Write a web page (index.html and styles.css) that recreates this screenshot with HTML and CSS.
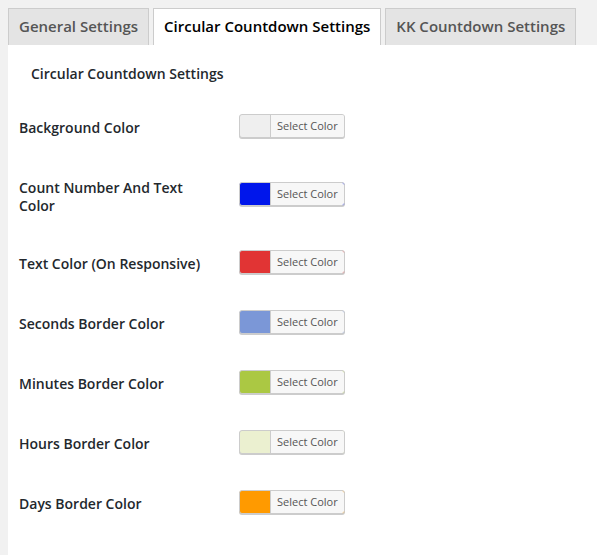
FILE: index.html
```html
<!DOCTYPE html>
<html>
<head>
<meta charset="utf-8">
<link rel="stylesheet" href="styles.css">
</head>
<body>
<div class="wrap">
  <nav class="tabs">
    <a class="tab">General Settings</a>
    <a class="tab active">Circular Countdown Settings</a>
    <a class="tab">KK Countdown Settings</a>
  </nav>
  <div class="panel">
    <h3 class="section-title">Circular Countdown Settings</h3>
    <table class="form-table">
      <tr>
        <th>Background Color</th>
        <td><span class="color-result" style="background-color:#efefef"><span class="color-label">Select Color</span></span></td>
      </tr>
      <tr>
        <th>Count Number And Text Color</th>
        <td><span class="color-result" style="background-color:#0016eb"><span class="color-label">Select Color</span></span></td>
      </tr>
      <tr>
        <th>Text Color (On Responsive)</th>
        <td><span class="color-result" style="background-color:#e13434"><span class="color-label">Select Color</span></span></td>
      </tr>
      <tr>
        <th>Seconds Border Color</th>
        <td><span class="color-result" style="background-color:#7b97d7"><span class="color-label">Select Color</span></span></td>
      </tr>
      <tr>
        <th>Minutes Border Color</th>
        <td><span class="color-result" style="background-color:#abc843"><span class="color-label">Select Color</span></span></td>
      </tr>
      <tr>
        <th>Hours Border Color</th>
        <td><span class="color-result" style="background-color:#ebf0d0"><span class="color-label">Select Color</span></span></td>
      </tr>
      <tr>
        <th>Days Border Color</th>
        <td><span class="color-result" style="background-color:#ff9a00"><span class="color-label">Select Color</span></span></td>
      </tr>
    </table>
  </div>
</div>
</body>
</html>
```

FILE: styles.css
```css
html, body {
  margin: 0;
  padding: 0;
  height: 100%;
}
body {
  background: #f1f1f1;
  font-family: "Open Sans", "Noto Sans", sans-serif;
  color: #23282d;
  overflow: hidden;
}
.wrap {
  padding-left: 8px;
  height: 100%;
  display: flex;
  flex-direction: column;
}
.tabs {
  display: flex;
  gap: 4px;
  padding-top: 8px;
  flex: none;
}
.tab {
  display: block;
  box-sizing: border-box;
  height: 37px;
  padding: 5px 10px 0;
  border: 1px solid #ccc;
  border-bottom: none;
  background: #e4e4e4;
  color: #555;
  font-size: 15px;
  font-weight: 600;
  line-height: 24px;
  white-space: nowrap;
  text-decoration: none;
}
.tab.active {
  background: #fff;
  color: #000;
  border-color: #ccc;
}
.panel {
  flex: 1;
  background: #fff;
  padding: 0 0 0 11px;
}
.section-title {
  margin: 0;
  padding: 19px 0 0 12px;
  font-size: 14px;
  font-weight: 600;
  line-height: 19px;
  color: #23282d;
}
.form-table {
  border-collapse: collapse;
  margin-top: 16px;
}
.form-table th {
  width: 200px;
  padding: 20px 10px 20px 0;
  text-align: left;
  vertical-align: top;
  font-size: 14px;
  font-weight: 600;
  line-height: 18.2px;
  color: #23282d;
}
.form-table td {
  padding: 15px 10px;
  vertical-align: middle;
  line-height: 1.3;
}
.color-result {
  display: inline-block;
  vertical-align: bottom;
  height: 22px;
  margin: 0 6px 6px 0;
  padding-left: 30px;
  border: 1px solid #ccc;
  border-radius: 3px;
  box-shadow: 0 1px 0 #ccc;
}
.color-label {
  display: block;
  background: #f7f7f7;
  border-left: 1px solid #ccc;
  border-radius: 0 2px 2px 0;
  color: #555;
  font-size: 11px;
  line-height: 22px;
  padding: 0 6px;
}
```
